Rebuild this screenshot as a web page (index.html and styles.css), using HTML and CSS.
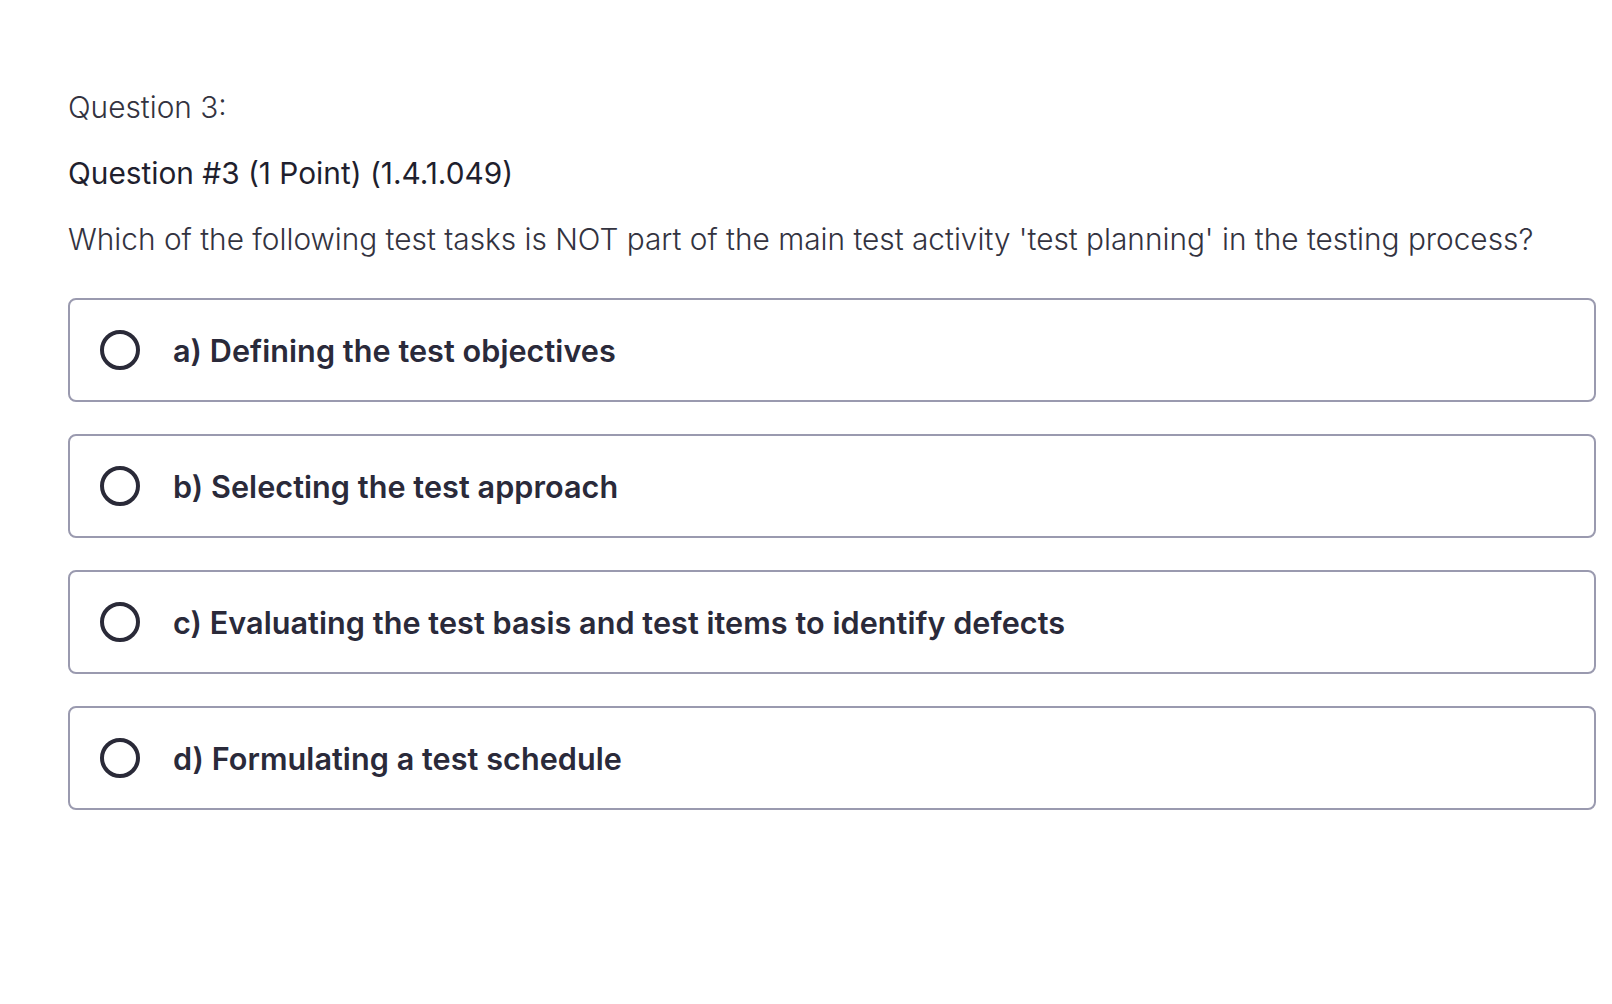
FILE: index.html
```html
<!DOCTYPE html>
<html lang="en">
<head>
<meta charset="utf-8">
<title>Question 3</title>
<link rel="stylesheet" href="styles.css">
</head>
<body>
<main class="page">
  <p class="label">Question 3:</p>
  <p class="title">Question #3 (1 Point) (1.4.1.049)</p>
  <p class="prompt">Which of the following test tasks is NOT part of the main test activity 'test planning' in the testing process?</p>
  <div class="options" role="radiogroup">
    <label class="option"><span class="radio"></span><span class="option-text">a) Defining the test objectives</span></label>
    <label class="option"><span class="radio"></span><span class="option-text">b) Selecting the test approach</span></label>
    <label class="option"><span class="radio"></span><span class="option-text">c) Evaluating the test basis and test items to identify defects</span></label>
    <label class="option"><span class="radio"></span><span class="option-text">d) Formulating a test schedule</span></label>
  </div>
</main>
</body>
</html>
```

FILE: styles.css
```css
html, body {
  margin: 0;
  padding: 0;
  background: #ffffff;
}

body {
  font-family: Inter, "Noto Sans", "Liberation Sans", sans-serif;
  color: #1f1f2e;
}

.page {
  padding: 89px 16px 0 68px;
}

.label,
.title,
.prompt {
  margin: 0 0 30px;
  font-size: 29.8px;
  line-height: 36px;
  letter-spacing: 0;
}

.label {
  color: #33333f;
  font-weight: 300;
}

.title {
  color: #1f1f2e;
  font-weight: 400;
}

.prompt {
  color: #33333f;
  font-weight: 300;
  margin-bottom: 41px;
}

.options {
  display: flex;
  flex-direction: column;
  gap: 32px;
}

.option {
  display: flex;
  align-items: center;
  height: 100px;
  border: 2px solid #9a9aaf;
  border-radius: 8px;
  padding-left: 30px;
}

.radio {
  box-sizing: border-box;
  width: 40px;
  height: 40px;
  border: 4px solid #2a2a38;
  border-radius: 50%;
  flex: none;
}

.option-text {
  margin-left: 33px;
  font-size: 30.6px;
  font-weight: 600;
  color: #2a2a3a;
  letter-spacing: 0.05px;
}
```
